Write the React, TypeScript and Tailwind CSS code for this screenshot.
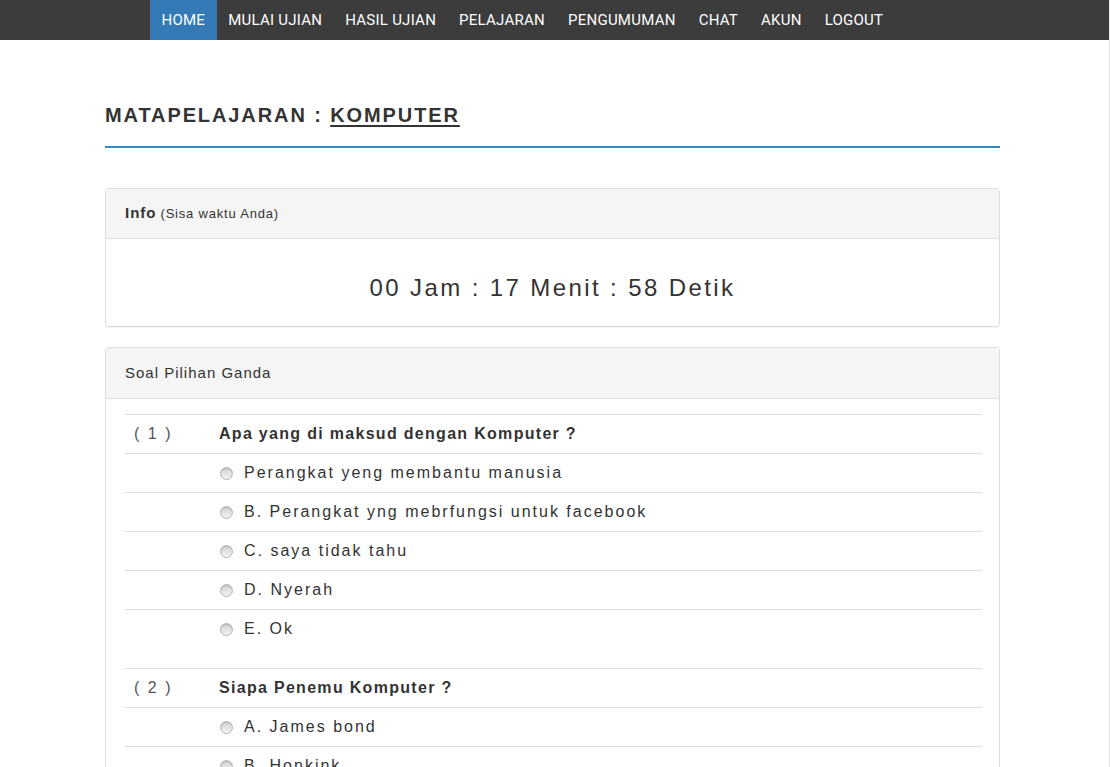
const menu = ["HOME", "MULAI UJIAN", "HASIL UJIAN", "PELAJARAN", "PENGUMUMAN", "CHAT", "AKUN", "LOGOUT"];

interface Soal {
  no: number;
  tanya: string;
  pilihan: string[];
}

const soalList: Soal[] = [
  {
    no: 1,
    tanya: "Apa yang di maksud dengan Komputer ?",
    pilihan: [
      "Perangkat yeng membantu manusia",
      "B. Perangkat yng mebrfungsi untuk facebook",
      "C. saya tidak tahu",
      "D. Nyerah",
      "E. Ok",
    ],
  },
  {
    no: 2,
    tanya: "Siapa Penemu Komputer ?",
    pilihan: ["A. James bond", "B. Honkink", "C. Einstein", "D. Newton", "E. Tidak ada"],
  },
];

function Radio() {
  return (
    <span className="inline-block w-[13px] h-[13px] rounded-full border border-[#b5b5b5] bg-gradient-to-b from-[#d4d4d4] to-[#f2f2f2] shadow-[inset_0_1px_1px_rgba(0,0,0,0.15)]" />
  );
}

export default function App() {
  return (
    <div className="min-h-[767px] bg-white text-[#333] font-['Liberation_Sans',Arial,sans-serif] border-r border-[#e6e6e6]">
      <nav className="h-10 bg-[#3c3c3c] flex pl-[150px] font-['Roboto',sans-serif] text-[15px] tracking-[0.25px] text-white">
        {menu.map((item, i) => (
          <a
            key={item}
            className={`h-10 flex items-center px-[11.5px] ${i === 0 ? "bg-[#337ab7]" : ""}`}
          >
            {item}
          </a>
        ))}
      </nav>

      <div className="ml-[105px] w-[895px] pb-10">
        <div className="pt-[61px] pb-[17px] border-b-2 border-[#2f8ac0]">
          <h1 className="text-[20px] leading-[28px] font-bold tracking-[1.9px] text-[#333]">
            MATAPELAJARAN : <span className="underline underline-offset-[3px]">KOMPUTER</span>
          </h1>
        </div>

        <div className="mt-10 border border-[#ddd] rounded-[4px] shadow-[0_1px_1px_rgba(0,0,0,0.05)]">
          <div className="h-[50px] bg-[#f5f5f5] border-b border-[#ddd] rounded-t-[4px] flex items-center pl-[19px]">
            <span className="text-[15px] font-bold tracking-[1px]">Info</span>
            <span className="text-[13px] tracking-[0.8px] ml-[4px]">(Sisa waktu Anda)</span>
          </div>
          <div className="pt-[32px] pb-[21px] text-center text-[24px] leading-[34px] tracking-[2.4px]">
            00 Jam : 17 Menit : 58 Detik
          </div>
        </div>

        <div className="mt-[20px] border border-[#ddd] rounded-[4px] shadow-[0_1px_1px_rgba(0,0,0,0.05)]">
          <div className="h-[51px] bg-[#f5f5f5] border-b border-[#ddd] rounded-t-[4px] flex items-center pl-[19px]">
            <span className="text-[15px] tracking-[1px]">Soal Pilihan Ganda</span>
          </div>
          <div className="pt-[15px] pl-[19px] pr-[17px]">
            {soalList.map((soal) => (
              <div key={soal.no} className="mb-5">
                <div className="h-[39px] border-t border-[#ddd] flex items-center">
                  <span className="w-[94px] pl-[9px] text-[16px] tracking-[2px] text-[#555]">( {soal.no} )</span>
                  <span className="text-[16px] font-bold tracking-[1.3px] text-[#333]">{soal.tanya}</span>
                </div>
                {soal.pilihan.map((p) => (
                  <div key={p} className="h-[39px] border-t border-[#ddd] flex items-center pl-[95px]">
                    <Radio />
                    <span className="ml-[11px] text-[16px] tracking-[2px] text-[#333]">{p}</span>
                  </div>
                ))}
              </div>
            ))}
          </div>
        </div>
      </div>
    </div>
  );
}
